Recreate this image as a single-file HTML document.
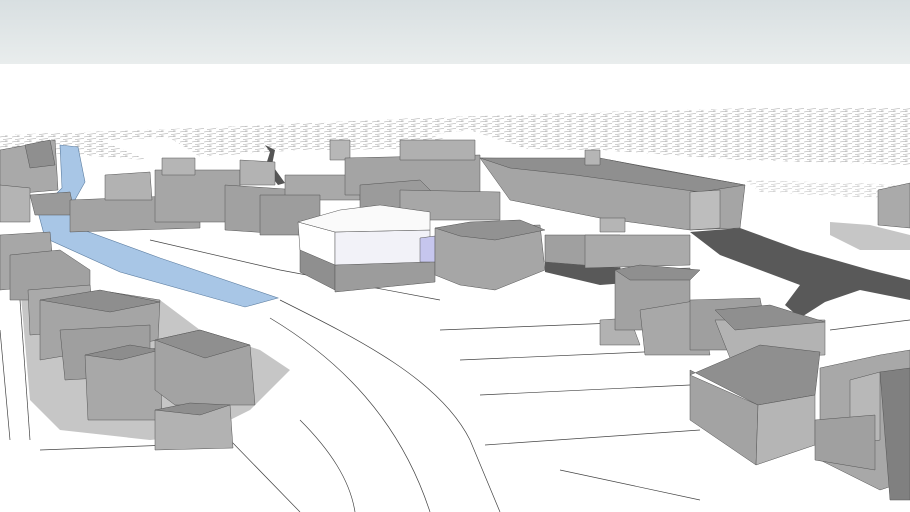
<!DOCTYPE html>
<html><head><meta charset="utf-8"><style>
html,body{margin:0;padding:0;background:#fff;width:910px;height:512px;overflow:hidden}
svg{display:block}
</style></head><body>
<svg width="910" height="512" viewBox="0 0 910 512" xmlns="http://www.w3.org/2000/svg">
<defs>
<linearGradient id="sky" x1="0" y1="0" x2="0" y2="1"><stop offset="0" stop-color="#d8dfe1"/><stop offset="1" stop-color="#e9eded"/></linearGradient>
<pattern id="city" width="12" height="5" patternUnits="userSpaceOnUse"><path d="M0 2 L8 1 M3 4.5 L12 3.5 M6 0 L6 2" stroke="#555" stroke-width="0.6"/></pattern>
</defs>
<rect width="910" height="64" fill="url(#sky)"/>
<rect y="64" width="910" height="448" fill="#fff"/>
<!-- far city texture -->
<polygon points="0,135 200,128 420,118 600,112 760,108 910,108 910,165 740,160 600,150 480,148 300,150 150,160 0,150" fill="url(#city)" opacity="0.55"/>
<polygon points="100,140 170,138 230,175 190,178" fill="#fff"/>
<polygon points="430,135 470,130 620,180 590,182" fill="#fff"/>
<polygon points="745,180 910,185 910,200 760,192" fill="url(#city)" opacity="0.4"/>
<!-- dark stream far -->
<polygon points="265,145 275,150 272,165 285,183 278,185 265,168 270,152" fill="#555"/>
<!-- ground shadows -->
<polygon points="20,285 80,300 160,300 200,330 260,350 290,370 250,410 200,435 150,440 60,430 30,400" fill="#c6c6c6"/>
<polygon points="830,222 870,225 910,235 910,250 860,250 830,235" fill="#c6c6c6"/>
<!-- dark road right -->
<path d="M690,232 L740,228 L800,250 L870,270 L910,280 L910,300 L860,290 L825,302 L800,318 L785,305 L800,285 L760,270 L720,255 Z" fill="#595959"/>
<polygon points="545,262 620,268 640,282 600,285 545,272" fill="#595959"/>
<!-- river -->
<path d="M60,145 L78,147 L85,182 L72,205 L78,228 L160,258 L278,298 L245,307 L120,272 L45,238 L38,212 L62,188 Z" fill="#a8c6e6" stroke="#5c7da0" stroke-width="0.6"/>
<!-- road lines -->
<g stroke="#444" stroke-width="0.7" fill="none">
<path d="M280,300 C360,340 440,380 470,440 L500,512"/>
<path d="M270,318 C340,360 400,420 430,512"/>
<path d="M300,420 C330,450 350,480 355,512"/>
<path d="M440,330 L690,320"/><path d="M460,360 L690,350"/><path d="M480,395 L690,385"/><path d="M485,445 L700,430"/>
<path d="M20,300 L30,440"/><path d="M40,450 L170,445"/>
<path d="M230,440 L300,512"/><path d="M560,470 L700,500"/>
<path d="M150,240 L280,270 L440,300"/>
<path d="M830,330 L910,320"/>
<path d="M0,330 L10,440"/>
</g>
<!-- back row buildings -->
<g stroke="#555" stroke-width="0.5">
<polygon points="0,150 55,140 58,190 0,195" fill="#a9a9a9"/>
<polygon points="25,145 50,140 55,165 30,168" fill="#8f8f8f"/>
<polygon points="0,185 30,188 30,222 0,222" fill="#b4b4b4"/>
<polygon points="30,195 70,192 75,215 35,215" fill="#9a9a9a"/>
<polygon points="70,200 200,195 200,228 70,232" fill="#a3a3a3"/>
<polygon points="105,175 150,172 152,200 105,200" fill="#b2b2b2"/>
<polygon points="155,170 240,170 240,222 155,222" fill="#a6a6a6"/>
<polygon points="162,158 195,158 195,175 162,175" fill="#b5b5b5"/>
<polygon points="225,185 300,190 300,235 225,230" fill="#a1a1a1"/>
<polygon points="240,160 275,162 275,185 240,185" fill="#b3b3b3"/>
<polygon points="285,175 360,175 360,200 285,200" fill="#a9a9a9"/>
<polygon points="330,140 350,140 350,160 330,160" fill="#b7b7b7"/>
<polygon points="345,158 480,155 480,195 345,195" fill="#a4a4a4"/>
<polygon points="400,140 475,140 475,160 400,160" fill="#b0b0b0"/>
<polygon points="260,195 320,195 320,235 260,235" fill="#9d9d9d"/>
<polygon points="360,185 420,180 440,200 400,220 360,215" fill="#9b9b9b"/>
<polygon points="400,190 500,192 500,220 400,220" fill="#a7a7a7"/>
<!-- big right back building -->
<polygon points="480,158 610,160 745,185 740,228 690,230 600,218 510,200" fill="#a5a5a5"/>
<polygon points="480,158 600,158 650,168 745,185 700,192 575,175 510,168" fill="#8f8f8f"/>
<polygon points="585,150 600,150 600,165 585,165" fill="#b5b5b5"/>
<polygon points="690,192 720,190 720,228 690,230" fill="#bdbdbd"/>
<polygon points="878,190 910,183 910,228 878,225" fill="#aaa"/>
<!-- central white building -->
<polygon points="300,245 335,255 335,290 300,272" fill="#8f8f8f"/>
<polygon points="335,265 435,258 435,282 335,292" fill="#9c9c9c"/>
<polygon points="298,222 335,232 335,265 300,250" fill="#fff"/>
<polygon points="335,232 430,230 430,262 335,265" fill="#f2f2f8"/>
<polygon points="298,222 340,210 380,205 430,212 430,230 335,232" fill="#fafafa"/>
<polygon points="420,238 435,236 435,262 420,262" fill="#c6c6ee"/>
<!-- mid right buildings -->
<polygon points="435,228 540,225 545,270 495,290 460,285 435,275" fill="#a6a6a6"/>
<polygon points="435,228 470,222 520,220 545,230 495,240 460,236" fill="#929292"/>
<polygon points="545,235 620,235 620,268 545,262" fill="#a0a0a0"/>
<polygon points="585,235 690,235 690,265 585,268" fill="#aaa"/>
<polygon points="600,218 625,218 625,232 600,232" fill="#b5b5b5"/>
<!-- right cluster -->
<polygon points="600,320 630,318 640,345 600,345" fill="#b2b2b2"/>
<polygon points="615,270 690,268 690,330 615,330" fill="#a2a2a2"/>
<polygon points="615,270 640,265 700,270 690,280 630,280" fill="#8f8f8f"/>
<polygon points="640,310 700,300 710,355 645,355" fill="#a8a8a8"/>
<polygon points="690,300 760,298 770,350 690,350" fill="#9f9f9f"/>
<polygon points="715,320 825,320 825,355 730,358" fill="#b3b3b3"/>
<polygon points="715,310 770,305 825,322 735,330" fill="#8f8f8f"/>
<!-- front right big buildings -->
<polygon points="690,375 760,345 820,352 815,395 758,405 690,370" fill="#8f8f8f"/>
<polygon points="690,375 758,405 756,465 690,420" fill="#a3a3a3"/>
<polygon points="758,405 815,395 815,445 756,465" fill="#b5b5b5"/>
<polygon points="820,368 880,355 910,350 910,480 880,490 820,460" fill="#a8a8a8"/>
<polygon points="850,380 880,372 880,440 850,445" fill="#b8b8b8"/>
<polygon points="880,372 910,368 910,500 890,500" fill="#808080"/>
<polygon points="815,420 875,415 875,470 815,460" fill="#a0a0a0"/>
<!-- left front cluster -->
<polygon points="0,235 50,232 55,285 0,290" fill="#a7a7a7"/>
<polygon points="10,255 60,250 90,270 90,300 10,300" fill="#a1a1a1"/>
<polygon points="28,290 90,285 95,330 30,335" fill="#aaa"/>
<polygon points="40,300 110,292 160,300 158,340 40,360" fill="#a5a5a5"/>
<polygon points="40,300 100,290 160,302 110,312" fill="#8e8e8e"/>
<polygon points="60,330 150,325 150,375 65,380" fill="#9f9f9f"/>
<polygon points="85,355 160,348 162,420 88,420" fill="#a8a8a8"/>
<polygon points="85,355 130,345 160,350 120,360" fill="#8d8d8d"/>
<polygon points="155,340 200,330 250,345 255,405 175,405 155,390" fill="#a3a3a3"/>
<polygon points="155,340 200,330 250,345 205,358" fill="#8f8f8f"/>
<polygon points="155,410 230,405 233,448 155,450" fill="#b2b2b2"/>
<polygon points="155,410 190,403 230,405 200,415" fill="#8e8e8e"/>
</g>
</svg>
</body></html>
